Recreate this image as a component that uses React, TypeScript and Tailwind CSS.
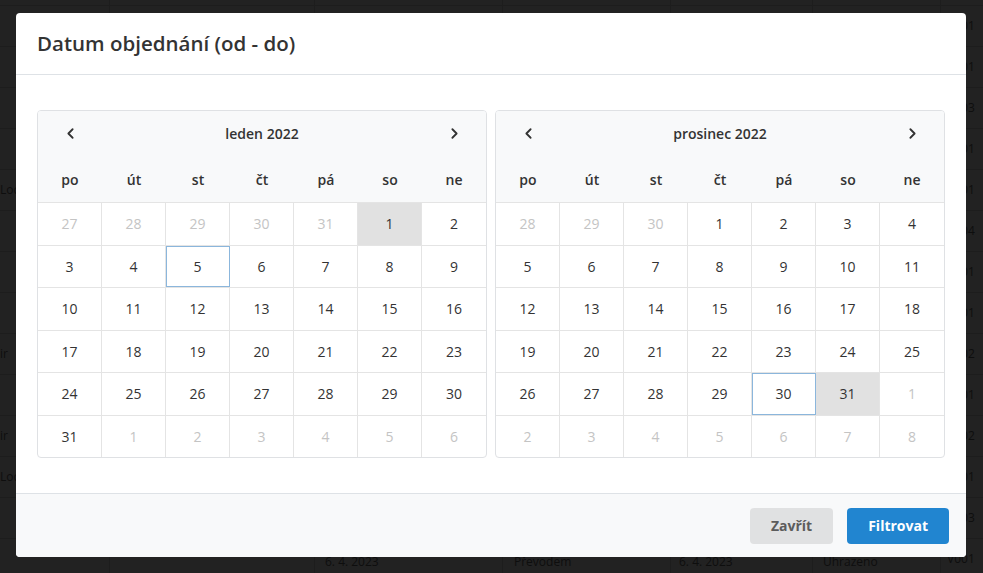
import { ChevronLeft, ChevronRight } from 'lucide-react';

type Day = { n: number; out?: boolean; sel?: boolean; focus?: boolean };

var weekDays = ['po', 'út', 'st', 'čt', 'pá', 'so', 'ne'];

function buildDays(prevStart: number, prevEnd: number, count: number, nextCount: number, sel: number, focus: number): Day[] {
  var days: Day[] = [];
  for (var p = prevStart; p <= prevEnd; p++) days.push({ n: p, out: true });
  for (var d = 1; d <= count; d++) days.push({ n: d, sel: d === sel, focus: d === focus });
  for (var x = 1; x <= nextCount; x++) days.push({ n: x, out: true });
  return days;
}

var january = buildDays(27, 31, 31, 6, 1, 5);
var december = buildDays(28, 30, 31, 8, 31, 30);

function Calendar(props: { title: string; days: Day[] }) {
  var rows: Day[][] = [];
  for (var i = 0; i < props.days.length; i += 7) rows.push(props.days.slice(i, i + 7));

  return (
    <div className="flex-1 border border-[#dfe1e4] rounded-[4px] overflow-hidden bg-white">
      <div className="bg-[#f8f9fa]">
        <div className="grid grid-cols-7 h-[45px] items-center">
          <div className="flex justify-center text-[#333]">
            <ChevronLeft size={17} strokeWidth={2.6} />
          </div>
          <div className="col-span-5 text-center text-[14px] font-semibold text-[#333]">{props.title}</div>
          <div className="flex justify-center text-[#333]">
            <ChevronRight size={17} strokeWidth={2.6} />
          </div>
        </div>
        <div className="grid grid-cols-7 h-[46px] items-center">
          {weekDays.map(function(w) {
            return <div key={w} className="text-center text-[14px] font-semibold text-[#333]">{w}</div>;
          })}
        </div>
      </div>
      {rows.map(function(row, ri) {
        return (
          <div key={ri} className="grid grid-cols-7 border-t border-[#e4e4e4]">
            {row.map(function(day, di) {
              var cls = 'h-[41.5px] flex items-center justify-center text-[14px] ';
              if (di < 6) cls += 'border-r border-[#e4e4e4] ';
              if (day.out) cls += 'text-[#c4c4c4] ';
              else cls += 'text-[#333] ';
              if (day.sel) cls += 'bg-[#e1e1e1] ';
              if (day.focus) cls += 'outline outline-1 -outline-offset-1 outline-[#8bb6dc] ';
              return <div key={di} className={cls}>{day.n}</div>;
            })}
          </div>
        );
      })}
    </div>
  );
}

var bgRows = [
  { l: '', r: 'V001' },
  { l: '', r: 'V001' },
  { l: '', r: 'V001' },
  { l: '', r: 'V003' },
  { l: '', r: 'V001' },
  { l: 'Loc', r: 'V001' },
  { l: '', r: 'V004' },
  { l: '', r: 'V001' },
  { l: '', r: 'V001' },
  { l: 'ir', r: 'V002' },
  { l: '', r: 'V001' },
  { l: 'ir', r: 'V002' },
  { l: 'Loc', r: 'V001' },
  { l: '', r: 'V003' },
  { l: '', r: 'V001' },
];

export default function App() {
  return (
    <div className="relative w-[983px] h-[573px] overflow-hidden bg-[#222] text-[14px]" style={{ fontFamily: '"Open Sans", "Liberation Sans", sans-serif' }}>
      {/* dimmed table behind the dialog */}
      <div className="-mt-[35px] text-[#0e0e0e] text-[12px]">
        {bgRows.map(function(row, i) {
          var last = i === bgRows.length - 1;
          return (
            <div key={i} className="flex h-[41px] items-center border-b border-[#1d1d1d] whitespace-nowrap">
              <div className="w-[110px] h-full flex items-center border-r border-[#1d1d1d]">{row.l}</div>
              <div className="w-[204px] h-full"></div>
              <div className="w-[188px] h-full flex items-center pl-[10px] pt-[5px] border-l border-[#1d1d1d]">{last ? '6. 4. 2023' : ''}</div>
              <div className="w-[168px] h-full flex items-center pl-[11px] pt-[5px] border-l border-[#1d1d1d]">{last ? 'Převodem' : ''}</div>
              <div className="w-[142px] h-full flex items-center pl-[8px] pt-[5px] border-l border-[#1d1d1d]">{last ? '6. 4. 2023' : ''}</div>
              <div className="w-[128px] h-full flex items-center pl-[10px] pt-[5px] border-l border-[#1d1d1d]">{last ? 'Uhrazeno' : ''}</div>
              <div className="flex-1 h-full flex items-center pl-[6px] border-l border-[#1d1d1d]">{row.r}</div>
            </div>
          );
        })}
      </div>

      {/* dialog */}
      <div className="absolute left-[16px] top-[13px] w-[950px] h-[544px] bg-white rounded-[4px] flex flex-col overflow-hidden">
        <div className="h-[62px] flex items-center px-[21px] border-b border-[#dee2e6] shrink-0">
          <h2 className="text-[20.5px] font-semibold text-[#333] leading-none">Datum objednání (od - do)</h2>
        </div>
        <div className="flex-1 px-[21px] pt-[35px]">
          <div className="flex gap-2">
            <Calendar title="leden 2022" days={january} />
            <Calendar title="prosinec 2022" days={december} />
          </div>
        </div>
        <div className="h-[64px] shrink-0 bg-[#f8f9fa] border-t border-[#dee2e6] flex items-center justify-end gap-[14px] pr-[17px]">
          <button className="h-[36px] px-[21px] rounded-[4px] bg-[#e0e1e2] text-[#5c5c5c] font-bold text-[14px]">Zavřít</button>
          <button className="h-[36px] px-[21px] rounded-[4px] bg-[#2185d0] text-white font-bold text-[14px]">Filtrovat</button>
        </div>
      </div>
    </div>
  );
}
